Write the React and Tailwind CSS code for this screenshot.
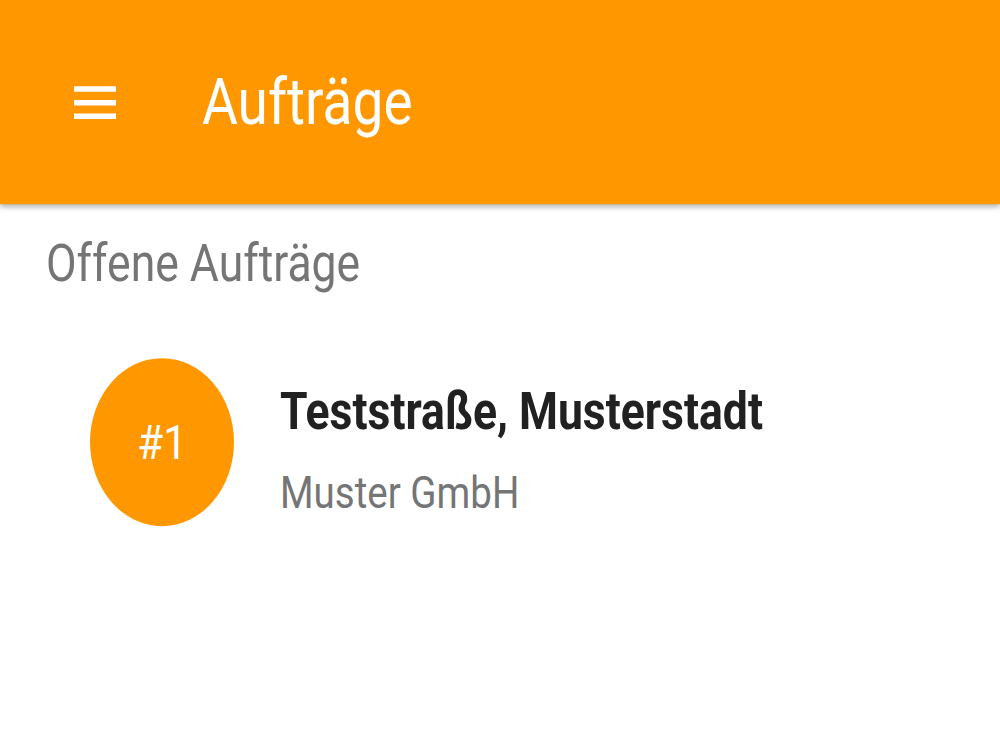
function Header() {
	return (
		<div className="flex items-center h-[175px] bg-[#ff9800] shadow-[0_3px_5px_rgba(0,0,0,0.3)] relative z-10">
			<svg
				viewBox="0 0 24 24"
				className="w-[56px] h-[56px] ml-[67px] fill-white"
			>
				<path d="M3 18h18v-2H3v2zm0-5h18v-2H3v2zm0-7v2h18V6H3z" />
			</svg>
			<h1 className="ml-[79px] text-[55px] leading-none text-white">
				Aufträge
			</h1>
		</div>
	);
}

function OrderItem({ number, street, company }) {
	return (
		<div className="flex items-start pl-[90px] mt-[58px]">
			<div className="flex items-center justify-center w-[144px] h-[144px] rounded-full bg-[#ff9800] text-white text-[42px] leading-none">
				#{number}
			</div>
			<div className="flex flex-col ml-[46px] mt-[24px]">
				<p className="text-[44.5px] leading-none font-bold text-[#212121]">
					{street}
				</p>
				<p className="mt-[28px] text-[38.5px] leading-none text-[#757575]">
					{company}
				</p>
			</div>
		</div>
	);
}

export default function App() {
	return (
		<div className="w-[1000px] h-[750px] overflow-hidden bg-white">
			<div
				className="w-[1000px] h-[643px] origin-top scale-y-[1.1667]"
				style={{ fontFamily: "Roboto, 'Noto Sans', sans-serif" }}
			>
				<Header />
				<h2 className="mt-[29px] pl-[46px] text-[44.5px] leading-none text-[#757575]">
					Offene Aufträge
				</h2>
				<OrderItem
					number={1}
					street="Teststraße, Musterstadt"
					company="Muster GmbH"
				/>
			</div>
		</div>
	);
}
